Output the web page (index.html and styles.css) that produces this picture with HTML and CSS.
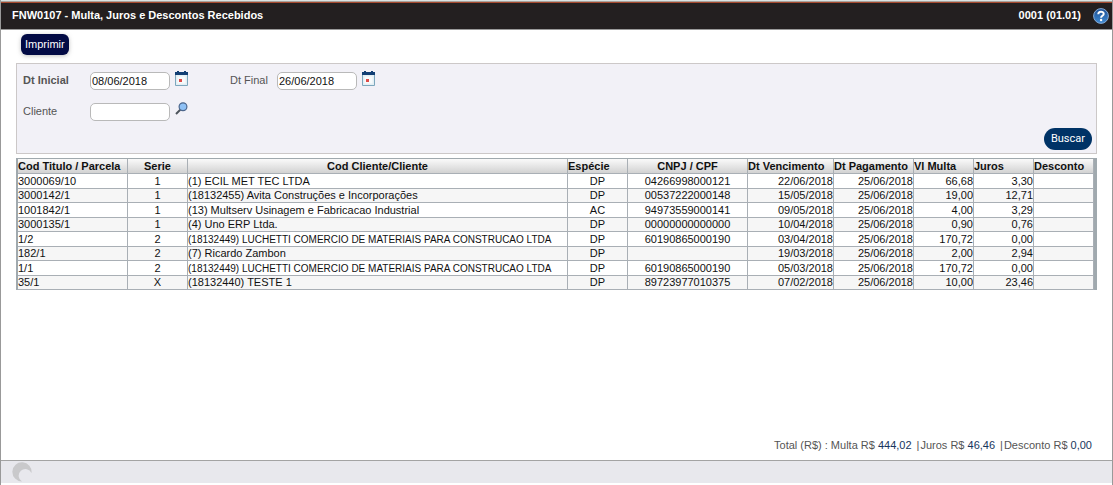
FILE: index.html
```html
<!DOCTYPE html>
<html lang="pt-BR">
<head>
<meta charset="utf-8">
<title>FNW0107 - Multa, Juros e Descontos Recebidos</title>
<link rel="stylesheet" href="styles.css">
</head>
<body>
<div class="window">
  <header class="titlebar">
    <h1 class="title">FNW0107 - Multa, Juros e Descontos Recebidos</h1>
    <span class="version">0001 (01.01)</span>
    <button class="icon-button" type="button" aria-label="Ajuda">
      <svg width="16" height="16" viewBox="0 0 16 16">
        <defs><linearGradient id="help" x1="0" y1="0" x2="0" y2="1"><stop offset="0" stop-color="#1d4f95"/><stop offset="1" stop-color="#3f8ad2"/></linearGradient></defs>
        <circle cx="8" cy="8" r="7.4" fill="url(#help)" stroke="#86a9d3"/>
        <path d="M5.3 6.2C5.3 2.9 10.8 3 10.7 6C10.7 7.8 8.1 7.8 8.1 9.7" fill="none" stroke="#fff" stroke-width="2"/>
        <circle cx="8.1" cy="12" r="1.2" fill="#fff"/>
      </svg>
    </button>
  </header>

  <main class="content">
    <div class="toolbar"><button class="print" type="button">Imprimir</button></div>

    <form class="filters">
      <div class="fields">
        <label class="label required" for="inicio">Dt Inicial</label>
        <div class="control">
          <input class="input" id="inicio" type="text" value="08/06/2018">
          <button class="icon-button" type="button" aria-label="Escolher data inicial">
            <svg width="13" height="15" viewBox="0 0 13 15"><path d="M.5 3.5h12v11H.5z" fill="#e3eff4" stroke="#7da7bd"/><path d="M2.5 5.5h8v7h-8z" fill="#f8fbfc"/><path d="M0 1h13v3H0z" fill="#123f74"/><path d="M2 0h2v2H2zM9 0h2v2H9z" fill="#123f74"/><path d="M4 8h3v3H4z" fill="#dd4b48"/></svg>
          </button>
        </div>
        <label class="label" for="fim">Dt Final</label>
        <div class="control">
          <input class="input" id="fim" type="text" value="26/06/2018">
          <button class="icon-button" type="button" aria-label="Escolher data final">
            <svg width="13" height="15" viewBox="0 0 13 15"><path d="M.5 3.5h12v11H.5z" fill="#e3eff4" stroke="#7da7bd"/><path d="M2.5 5.5h8v7h-8z" fill="#f8fbfc"/><path d="M0 1h13v3H0z" fill="#123f74"/><path d="M2 0h2v2H2zM9 0h2v2H9z" fill="#123f74"/><path d="M4 8h3v3H4z" fill="#dd4b48"/></svg>
          </button>
        </div>
        <label class="label" for="cliente">Cliente</label>
        <div class="control">
          <input class="input" id="cliente" type="text">
          <button class="icon-button" type="button" aria-label="Pesquisar cliente">
            <svg width="13" height="13" viewBox="0 0 13 13"><path d="M1 12l4.5-4.5" stroke="#4d545c" stroke-width="2"/><circle cx="8" cy="4.7" r="3.9" fill="#8fc1f5" stroke="#4c668c" stroke-width="1.2"/></svg>
          </button>
        </div>
      </div>
      <div class="actions"><button class="search" type="button">Buscar</button></div>
    </form>

    <table class="grid">
      <colgroup>
        <col class="w-titulo"><col class="w-60"><col><col class="w-60"><col class="w-cnpj"><col class="w-venc"><col class="w-pag"><col class="w-60"><col class="w-60"><col class="w-60">
      </colgroup>
      <thead>
        <tr><th>Cod Titulo / Parcela</th><th class="center">Serie</th><th class="center">Cod Cliente/Cliente</th><th>Espécie</th><th class="center">CNPJ / CPF</th><th>Dt Vencimento</th><th>Dt Pagamento</th><th>Vl Multa</th><th>Juros</th><th>Desconto</th></tr>
      </thead>
      <tbody>
        <tr><td>3000069/10</td><td class="center">1</td><td>(1) ECIL MET TEC LTDA</td><td class="center">DP</td><td class="center">04266998000121</td><td class="num">22/06/2018</td><td class="num">25/06/2018</td><td class="num">66,68</td><td class="num">3,30</td><td></td></tr>
        <tr><td>3000142/1</td><td class="center">1</td><td>(18132455) Avita Construções e Incorporações</td><td class="center">DP</td><td class="center">00537222000148</td><td class="num">15/05/2018</td><td class="num">25/06/2018</td><td class="num">19,00</td><td class="num">12,71</td><td></td></tr>
        <tr><td>1001842/1</td><td class="center">1</td><td>(13) Multserv Usinagem e Fabricacao Industrial</td><td class="center">AC</td><td class="center">94973559000141</td><td class="num">09/05/2018</td><td class="num">25/06/2018</td><td class="num">4,00</td><td class="num">3,29</td><td></td></tr>
        <tr><td>3000135/1</td><td class="center">1</td><td>(4) Uno ERP Ltda.</td><td class="center">DP</td><td class="center">00000000000000</td><td class="num">10/04/2018</td><td class="num">25/06/2018</td><td class="num">0,90</td><td class="num">0,76</td><td></td></tr>
        <tr><td>1/2</td><td class="center">2</td><td class="long">(18132449) LUCHETTI COMERCIO DE MATERIAIS PARA CONSTRUCAO LTDA</td><td class="center">DP</td><td class="center">60190865000190</td><td class="num">03/04/2018</td><td class="num">25/06/2018</td><td class="num">170,72</td><td class="num">0,00</td><td></td></tr>
        <tr><td>182/1</td><td class="center">2</td><td>(7) Ricardo Zambon</td><td class="center">DP</td><td class="center"></td><td class="num">19/03/2018</td><td class="num">25/06/2018</td><td class="num">2,00</td><td class="num">2,94</td><td></td></tr>
        <tr><td>1/1</td><td class="center">2</td><td class="long">(18132449) LUCHETTI COMERCIO DE MATERIAIS PARA CONSTRUCAO LTDA</td><td class="center">DP</td><td class="center">60190865000190</td><td class="num">05/03/2018</td><td class="num">25/06/2018</td><td class="num">170,72</td><td class="num">0,00</td><td></td></tr>
        <tr><td>35/1</td><td class="center">X</td><td>(18132440) TESTE 1</td><td class="center">DP</td><td class="center">89723977010375</td><td class="num">07/02/2018</td><td class="num">25/06/2018</td><td class="num">10,00</td><td class="num">23,46</td><td></td></tr>
      </tbody>
    </table>

    <div class="totals">
      <span>Total (R$) :</span>
      <span>Multa R$ <b class="value">444,02</b></span>
      <span class="part"><span>|</span><span>Juros R$ <b class="value">46,46</b></span></span>
      <span class="part"><span>|</span><span>Desconto R$ <b class="value">0,00</b></span></span>
    </div>
  </main>

  <footer class="statusbar">
    <svg width="20" height="20" viewBox="0 0 20 20"><path d="M10 19.5A9.6 9.6 0 1 1 19.5 11A6.7 6.7 0 1 0 10 19.5z" fill="#c9c9cb"/></svg>
  </footer>
</div>
</body>
</html>
```
FILE: styles.css
```css
* {
  box-sizing: border-box;
}

body {
  margin: 0;
  background: #fff;
  color: #111;
  font: 11px/13px "Liberation Sans", Arial, sans-serif;
}

button,
input {
  font: inherit;
}

.window {
  display: flex;
  flex-direction: column;
  min-height: 100vh;
  padding-bottom: 2px;
  border: solid #999;
  border-width: 0 1px;
}

.titlebar {
  display: flex;
  align-items: center;
  height: 30px;
  padding: 1px 3px 0 11px;
  border-top: 1px solid #d9e3e3;
  border-bottom: 1px solid #999;
  background: linear-gradient(#a9a19b 1px, #a5492f 1px, #a5492f 2px, #231f20 2px);
  color: #fff;
}

.title {
  flex: 1;
  margin: 0;
  font-size: 11px;
  font-weight: bold;
}

.version {
  margin-right: 12px;
  font-weight: bold;
}

.icon-button {
  padding: 0;
  border: 0;
  background: none;
}

.icon-button svg {
  display: block;
}

.content {
  display: flex;
  flex: 1;
  flex-direction: column;
  padding: 4px 15px 8px;
}

.toolbar {
  padding-left: 5px;
}

.print {
  height: 21px;
  padding: 0 4px;
  border: 0;
  border-radius: 6px;
  background: #020a44;
  box-shadow: 0 1px 4px #8888;
  color: #fff;
  font: 11px/21px "Liberation Sans", Arial, sans-serif;
}

.filters {
  margin-top: 8px;
  padding: 7px 4px 3px 6px;
  border: 1px solid #ccc8c8;
  background: #f2f1f7;
}

.fields {
  display: grid;
  grid-template-columns: 67px 140px 47px 140px;
  grid-auto-rows: 19px;
  gap: 12px 0;
  align-items: center;
}

.label {
  color: #555;
}

.required {
  font-weight: bold;
}

.control {
  display: flex;
  align-items: flex-start;
  gap: 5px;
}

.input {
  width: 80px;
  height: 18px;
  margin-top: 1px;
  padding: 0 1px;
  border: 1px solid #b9b9b9;
  border-radius: 5px;
  background: #fff;
  color: #111;
}

.actions {
  display: flex;
  justify-content: flex-end;
  margin-top: 7px;
}

.search {
  height: 22px;
  padding: 0 7px;
  border: 0;
  border-radius: 11px;
  background: #003366;
  color: #fff;
  font: 11px/22px Roboto, sans-serif;
}

.grid {
  width: 100%;
  margin-top: 4px;
  table-layout: fixed;
  border-collapse: separate;
  border-spacing: 0;
  border: solid #a0a9ae;
  border-width: 1px 3px 0 2px;
}

.w-titulo { width: 110px; }
.w-60 { width: 60px; }
.w-cnpj { width: 120px; }
.w-venc { width: 86px; }
.w-pag { width: 80px; }

.grid th,
.grid td {
  height: 15px;
  padding: 0;
  border: solid #a9afb5;
  border-width: 0 1px 1px 0;
  overflow: hidden;
  line-height: 13px;
  text-align: left;
  white-space: nowrap;
}

.grid th {
  background: linear-gradient(#fafafa, #d2d2d2);
}

.grid tr:nth-child(even) td {
  height: 14px;
  background: #f6f6f6;
}

.grid .center {
  text-align: center;
}

.grid .num {
  text-align: right;
}

.grid .long {
  font-size: 10px;
}

.totals {
  display: flex;
  justify-content: flex-end;
  gap: 3px;
  margin-top: auto;
  padding-right: 5px;
  color: #555;
}

.part {
  display: flex;
  gap: 1px;
  margin-left: 2px;
}

.value {
  color: #17365d;
  font-weight: normal;
}

.statusbar {
  height: 23px;
  padding: 1px 11px;
  border-top: 1px solid #a3a3a3;
  background: #e8e8ed;
}

.statusbar svg {
  display: block;
}
```
